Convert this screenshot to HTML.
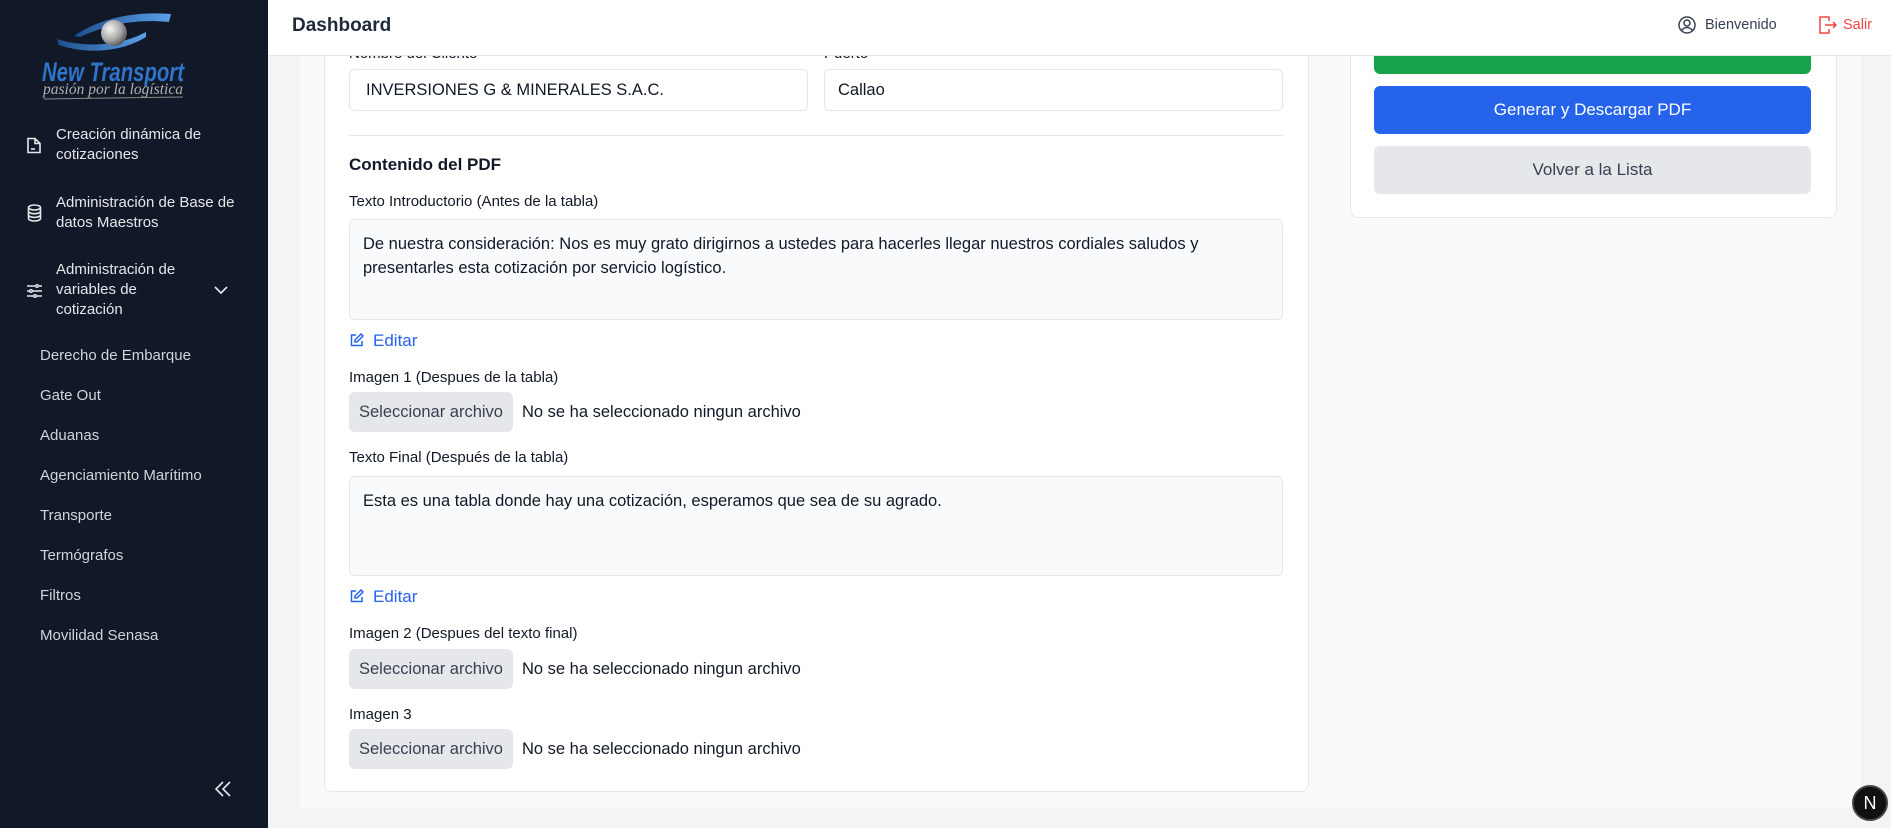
<!DOCTYPE html>
<html><head><meta charset="utf-8"><style>
*{box-sizing:border-box;margin:0;padding:0}
body{width:1891px;height:828px;overflow:hidden;background:#f3f4f6;font-family:"Liberation Sans",Arial,sans-serif;position:relative;color:#111827}
.abs{position:absolute}
#side{left:0;top:0;width:268px;height:828px;background:#111827;color:#e5e7eb}
.mi{position:absolute;left:56px;font-size:15px;line-height:20px;color:#e5e7eb}
.sub{position:absolute;left:40px;font-size:15px;color:#d1d5db;line-height:20px}
.panel{left:300px;top:56px;width:1561px;height:752px;background:#f9fafb}
.card{background:#fff;border:1px solid #e5e7eb;border-radius:8px}
.inp{border:1px solid #e5e7eb;border-radius:6px;background:#fff;font-size:16.5px;line-height:20px;padding:10px 16px;color:#111827}
.ta{border:1px solid #e5e7eb;border-radius:6px;background:#f9fafb;font-size:16.5px;line-height:24px;padding:12px 13px;color:#111827}
.lbl{font-size:15px;color:#111827;line-height:18px}
.edit{font-size:17px;color:#2563eb;line-height:20px}
.fb{background:#e5e7eb;border-radius:6px;font-size:16.5px;color:#374151;text-align:center;line-height:40px;width:164px;height:40px}
.ft{font-size:16.5px;color:#111827;line-height:20px}
.btn{left:1374px;width:437px;border-radius:6px;text-align:center;font-size:17px}
</style></head><body>
<div id="side" class="abs">
<svg class="abs" style="left:0;top:0" width="268" height="110" viewBox="0 0 268 110">
<defs><radialGradient id="sg" cx="0.35" cy="0.35" r="0.7"><stop offset="0" stop-color="#f5f5f5"/><stop offset="0.6" stop-color="#a8a8a8"/><stop offset="1" stop-color="#555"/></radialGradient>
<linearGradient id="bl" x1="0" x2="1"><stop offset="0" stop-color="#1d4f8f"/><stop offset="1" stop-color="#5aa0e8"/></linearGradient></defs>
<path d="M74 36 C100 18 135 11 171 14 L169 22 C140 19 110 23 80 37 Z" fill="url(#bl)"/>
<path d="M57 39 C85 48 120 46 146 32 L146 37 C120 53 85 54 59 45 Z" fill="url(#bl)"/>
<circle cx="114" cy="33" r="13" fill="url(#sg)"/>
<text x="42" y="81" font-family="Liberation Sans" font-weight="bold" font-style="italic" font-size="27" fill="#2f74c9" textLength="142" lengthAdjust="spacingAndGlyphs">New Transport</text>
<text x="43" y="94" font-family="Liberation Serif" font-style="italic" font-size="16" fill="#b0b0b0" textLength="140" lengthAdjust="spacingAndGlyphs">pasión por la logística</text>
<path d="M44 99 L183 97" stroke="#888" stroke-width="1"/>
</svg>
<svg class="abs" style="left:27px;top:137px" width="14" height="17" viewBox="0 0 14 17" fill="none" stroke="#e5e7eb" stroke-width="1.6"><path d="M1 1.5h7l5 5v9H1z"/><path d="M8 1.5v5h5"/><path d="M4 12h4"/></svg>
<div class="mi" style="top:125px">Creación dinámica de<br>cotizaciones</div>
<svg class="abs" style="left:27px;top:204px" width="15" height="18" viewBox="0 0 15 18" fill="none" stroke="#e5e7eb" stroke-width="1.6"><ellipse cx="7.5" cy="3.5" rx="6" ry="2.5"/><path d="M1.5 3.5v11c0 1.4 2.7 2.5 6 2.5s6-1.1 6-2.5v-11"/><path d="M1.5 7.2c0 1.4 2.7 2.5 6 2.5s6-1.1 6-2.5M1.5 10.9c0 1.4 2.7 2.5 6 2.5s6-1.1 6-2.5"/></svg>
<div class="mi" style="top:193px">Administración de Base de<br>datos Maestros</div>
<svg class="abs" style="left:27px;top:284px" width="15" height="14" viewBox="0 0 15 14" fill="none" stroke="#e5e7eb" stroke-width="1.4"><path d="M0 2h15M0 7h15M0 12h15"/><circle cx="10" cy="2" r="1.3" fill="#111827"/><circle cx="4" cy="7" r="1.3" fill="#111827"/><circle cx="8" cy="12" r="1.3" fill="#111827"/></svg>
<div class="mi" style="top:260px">Administración de<br>variables de<br>cotización</div>
<svg class="abs" style="left:214px;top:286px" width="14" height="9" viewBox="0 0 14 9" fill="none" stroke="#e5e7eb" stroke-width="1.6"><path d="M1 1l6 6 6-6"/></svg>
<div class="sub" style="top:346px">Derecho de Embarque</div>
<div class="sub" style="top:386px">Gate Out</div>
<div class="sub" style="top:426px">Aduanas</div>
<div class="sub" style="top:466px">Agenciamiento Marítimo</div>
<div class="sub" style="top:506px">Transporte</div>
<div class="sub" style="top:546px">Termógrafos</div>
<div class="sub" style="top:586px">Filtros</div>
<div class="sub" style="top:626px">Movilidad Senasa</div>
<svg class="abs" style="left:215px;top:781px" width="17" height="16" viewBox="0 0 17 16" fill="none" stroke="#e5e7eb" stroke-width="1.6"><path d="M8 1L1 8l7 7M15 1L8 8l7 7"/></svg>
</div>
<div class="abs panel"></div>
<div class="abs card" style="left:324px;top:30px;width:985px;height:762px;border-top:none;border-radius:0 0 8px 8px"></div>
<div class="abs card" style="left:1350px;top:30px;width:487px;height:188px;border-top:none;border-radius:0 0 8px 8px"></div>
<div class="abs lbl" style="left:349px;top:45px">Nombre del Cliente</div>
<div class="abs lbl" style="left:824px;top:45px">Puerto</div>
<div class="abs" style="left:268px;top:0;width:1623px;height:56px;background:#fff;border-bottom:1px solid #e5e7eb;z-index:1">
<div class="abs" style="left:24px;top:15px;font-size:19px;font-weight:bold;color:#1f2937">Dashboard</div>
<svg class="abs" style="left:1410px;top:16px" width="18" height="18" viewBox="0 0 18 18" fill="none" stroke="#374151" stroke-width="1.5"><circle cx="9" cy="9" r="8"/><circle cx="9" cy="7" r="3"/><path d="M3.5 14.5c1.5-2 3.3-3 5.5-3s4 1 5.5 3"/></svg>
<div class="abs" style="left:1437px;top:17px;font-size:14.5px;color:#374151">Bienvenido</div>
<svg class="abs" style="left:1551px;top:15px" width="18" height="20" viewBox="0 0 18 20" fill="none" stroke="#ef4444" stroke-width="1.5"><path d="M10 6V2H1v16h9v-4"/><path d="M6 10h11M14 7l3 3-3 3"/></svg>
<div class="abs" style="left:1575px;top:17px;font-size:14.5px;color:#ef4444">Salir</div>
</div>
<div class="abs inp" style="left:349px;top:69px;width:459px;height:42px">INVERSIONES G &amp; MINERALES S.A.C.</div>
<div class="abs inp" style="left:824px;top:69px;width:459px;height:42px;padding-left:13px">Callao</div>
<div class="abs" style="left:349px;top:135px;width:934px;height:1px;background:#e5e7eb"></div>
<div class="abs" style="left:349px;top:155px;font-size:17px;font-weight:bold;color:#111827">Contenido del PDF</div>
<div class="abs lbl" style="left:349px;top:193px">Texto Introductorio (Antes de la tabla)</div>
<div class="abs ta" style="left:349px;top:219px;width:934px;height:101px">De nuestra consideración: Nos es muy grato dirigirnos a ustedes para hacerles llegar nuestros cordiales saludos y presentarles esta cotización por servicio logístico.</div>
<svg class="abs" style="left:350px;top:333px" width="14" height="14" viewBox="0 0 14 14" fill="none" stroke="#2563eb" stroke-width="1.5"><path d="M6 2H1.5v10.5H12V8"/><path d="M11 1l2 2-6 6H5V7z"/></svg>
<div class="abs edit" style="left:373px;top:331px">Editar</div>
<div class="abs lbl" style="left:349px;top:369px">Imagen 1 (Despues de la tabla)</div>
<div class="abs fb" style="left:349px;top:392px">Seleccionar archivo</div>
<div class="abs ft" style="left:522px;top:402px">No se ha seleccionado ningun archivo</div>
<div class="abs lbl" style="left:349px;top:449px">Texto Final (Después de la tabla)</div>
<div class="abs ta" style="left:349px;top:476px;width:934px;height:100px">Esta es una tabla donde hay una cotización, esperamos que sea de su agrado.</div>
<svg class="abs" style="left:350px;top:589px" width="14" height="14" viewBox="0 0 14 14" fill="none" stroke="#2563eb" stroke-width="1.5"><path d="M6 2H1.5v10.5H12V8"/><path d="M11 1l2 2-6 6H5V7z"/></svg>
<div class="abs edit" style="left:373px;top:587px">Editar</div>
<div class="abs lbl" style="left:349px;top:625px">Imagen 2 (Despues del texto final)</div>
<div class="abs fb" style="left:349px;top:649px">Seleccionar archivo</div>
<div class="abs ft" style="left:522px;top:659px">No se ha seleccionado ningun archivo</div>
<div class="abs lbl" style="left:349px;top:706px">Imagen 3</div>
<div class="abs fb" style="left:349px;top:729px">Seleccionar archivo</div>
<div class="abs ft" style="left:522px;top:739px">No se ha seleccionado ningun archivo</div>
<div class="abs btn" style="top:56px;height:18px;background:#16a34a;border-radius:0 0 6px 6px"></div>
<div class="abs btn" style="top:86px;height:48px;line-height:48px;background:#2563eb;color:#fff">Generar y Descargar PDF</div>
<div class="abs btn" style="top:146px;height:48px;line-height:48px;background:#e5e7eb;color:#374151">Volver a la Lista</div>
<div class="abs" style="left:1852px;top:785px;width:36px;height:36px;border-radius:50%;background:#111;border:2px solid #444;color:#fff;font-size:18px;line-height:32px;text-align:center">N</div>
</body></html>
